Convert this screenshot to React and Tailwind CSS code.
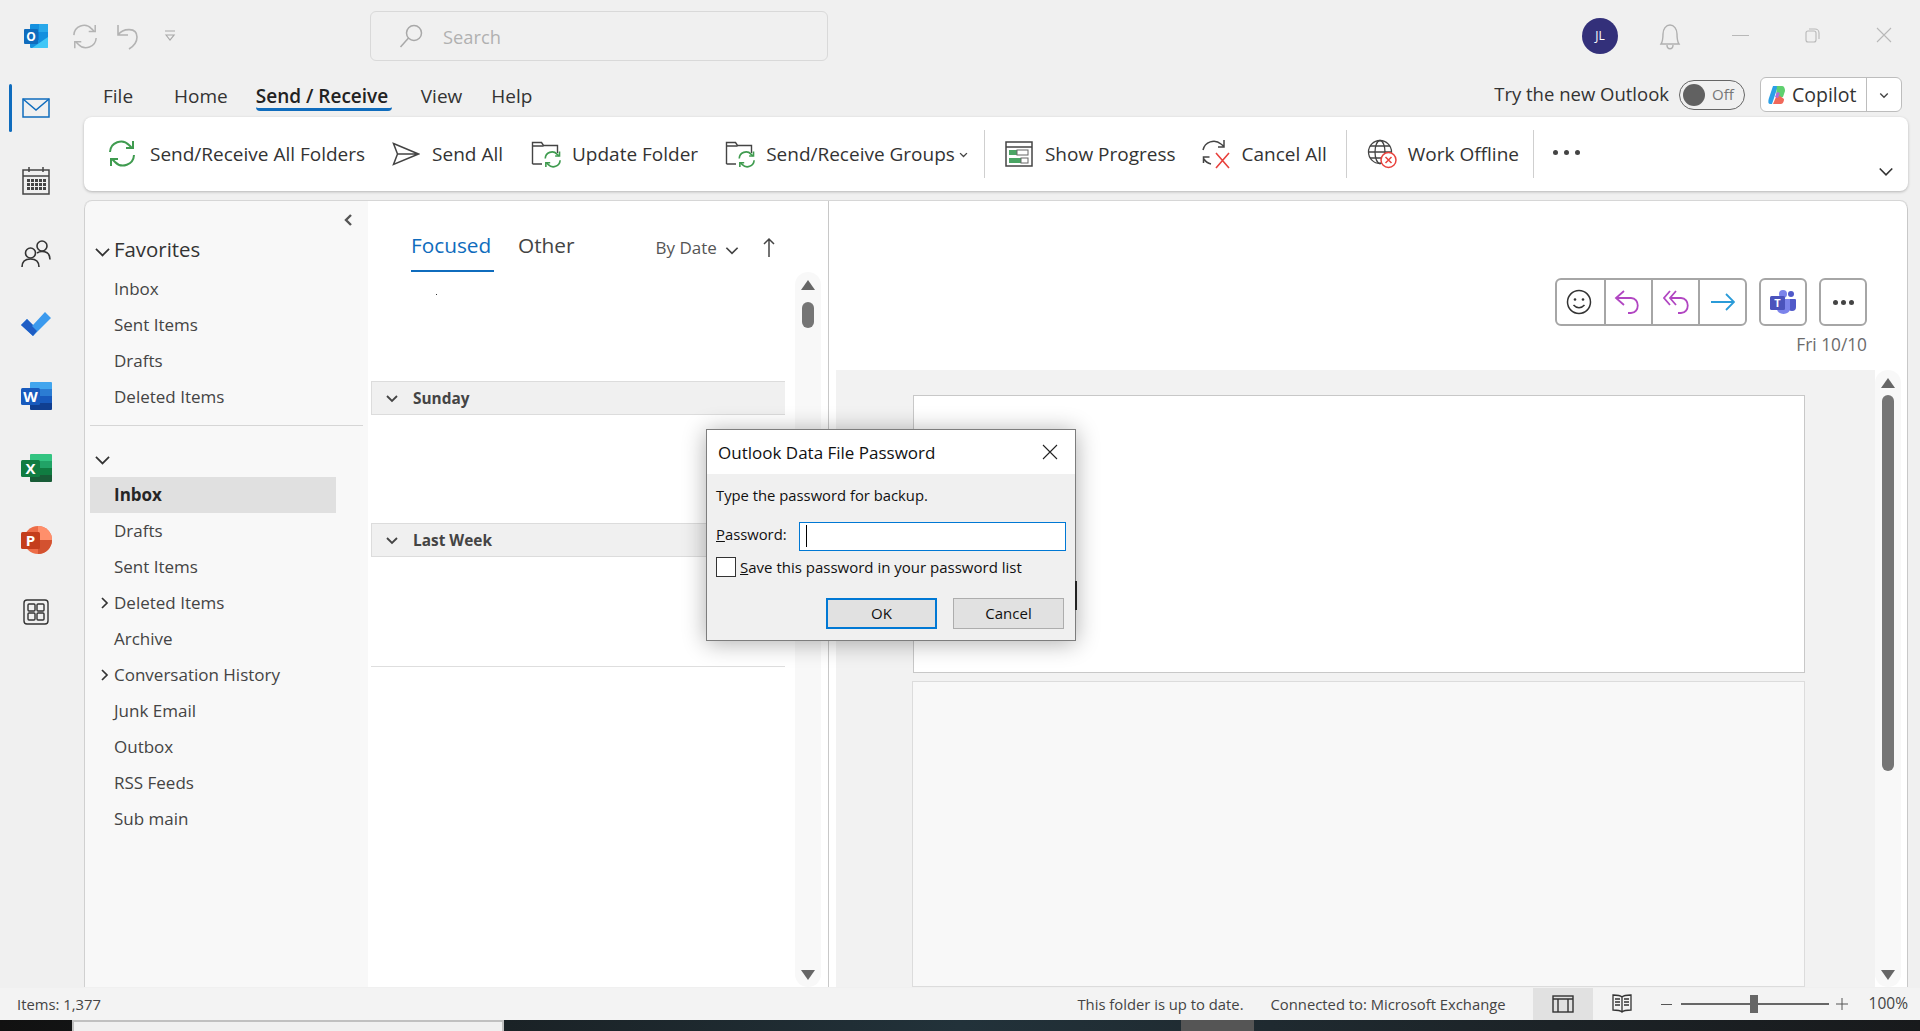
import React from "react";

const font = { fontFamily: '"Open Sans","Noto Sans",sans-serif' };

function SyncArcs({ x = 0, y = 0, s = 1, color = "#3f9b4f", w = 2 }) {
  return (
    <g transform={`translate(${x} ${y}) scale(${s})`} fill="none" stroke={color} strokeWidth={w}>
      <path d="M2 12a11 11 0 0 1 19-7l3 3" />
      <path d="M25 1v7h-7" />
      <path d="M26 15a11 11 0 0 1-19 7l-3-3" />
      <path d="M3 26v-7h7" />
    </g>
  );
}

const FolderIcon = () => (
  <svg width="30" height="30" viewBox="0 0 30 30" fill="none" className="block">
    <path d="M1.5 25V3.5h9l2 3h14V14" stroke="#444" strokeWidth="1.4" />
    <path d="M1.5 7h11M1.5 25H11" stroke="#444" strokeWidth="1.4" />
    <SyncArcs x={13} y={12} s={0.62} w={2.6} />
  </svg>
);

const SendAllIcon = () => (
  <svg width="28" height="24" viewBox="0 0 28 24" fill="none" stroke="#444" strokeWidth="1.5" className="block">
    <path d="M1.5 1.5 26.5 12 1.5 22.5 5.5 12ZM5.5 12h21" />
  </svg>
);

const ProgressIcon = () => (
  <svg width="28" height="26" viewBox="0 0 28 26" className="block">
    <rect x="1" y="1" width="26" height="24" fill="#fff" stroke="#444" strokeWidth="1.5" />
    <path d="M1 6h26" stroke="#444" strokeWidth="1.5" />
    <rect x="4" y="9" width="8" height="5" fill="#4aa564" />
    <rect x="12" y="9" width="11" height="5" fill="#fff" stroke="#666" />
    <rect x="4" y="17" width="12" height="5" fill="#4aa564" />
    <rect x="16" y="17" width="7" height="5" fill="#fff" stroke="#666" />
  </svg>
);

const CancelAllIcon = () => (
  <svg width="30" height="30" viewBox="0 0 30 30" fill="none" className="block">
    <path d="M2 11a11 11 0 0 1 18-6l3 2.5M23 1v7h-6" stroke="#444" strokeWidth="1.5" />
    <path d="M10 25a11 11 0 0 1-7-5M2.5 24v-6h6" stroke="#444" strokeWidth="1.5" />
    <path d="M15 14l13 15M28 14 15 29" stroke="#e8413c" strokeWidth="1.6" />
  </svg>
);

const WorkOfflineIcon = () => (
  <svg width="30" height="30" viewBox="0 0 30 30" fill="none" stroke="#444" strokeWidth="1.3" className="block">
    <circle cx="13" cy="13" r="11.5" />
    <ellipse cx="13" cy="13" rx="5" ry="11.5" />
    <path d="M1.5 13h23M3 7h20M3 19h20" />
    <circle cx="21.5" cy="21" r="7.5" fill="#fff" stroke="#e8413c" strokeWidth="1.5" />
    <path d="M18.5 18l6 6M24.5 18l-6 6" stroke="#e8413c" strokeWidth="1.5" />
  </svg>
);

const Chevron = ({ dir = "down", size = 16, w = 1.5, color = "#444" }) => {
  const d = { down: "M3 6l5 5 5-5", right: "M6 3l5 5-5 5", up: "M3 10l5-5 5 5", left: "M10 3 5 8l5 5" }[dir];
  return (
    <svg width={size} height={size} viewBox="0 0 16 16" fill="none" stroke={color} strokeWidth={w} className="block">
      <path d={d} />
    </svg>
  );
};

function Divider() {
  return <div className="w-px h-[48px] bg-[#cfcfcf]" />;
}

function RibbonBtn({ icon, label, iconW, gap, ml, extra }) {
  return (
    <div className="flex items-center shrink-0" style={{ marginLeft: ml }}>
      <div className="flex items-center justify-center" style={{ width: iconW, marginRight: gap }}>{icon}</div>
      <span className="text-[19px] text-[#333] leading-none whitespace-nowrap">{label}</span>
      {extra}
    </div>
  );
}

const RailMail = () => (
  <svg width="28" height="20" viewBox="0 0 28 20" fill="none" stroke="#0f6cbd" strokeWidth="1.5" className="block">
    <rect x="1" y="1" width="26" height="18" />
    <path d="M1 1l13 11L27 1" />
  </svg>
);
const RailCal = () => (
  <svg width="28" height="28" viewBox="0 0 28 28" fill="none" stroke="#444" strokeWidth="1.5" className="block">
    <rect x="1" y="3" width="26" height="24" />
    <path d="M1 9h26M7 0v5M21 0v5" />
    <g fill="#444" stroke="none">
      {[12, 16, 20].map((y) =>
        [5, 9, 13, 17, 21].map((x) => <rect key={x + "-" + y} x={x} y={y} width="3" height="3" />)
      )}
    </g>
  </svg>
);
const RailPeople = () => (
  <svg width="30" height="28" viewBox="0 0 30 28" fill="none" stroke="#333" strokeWidth="1.6" className="block">
    <circle cx="9.5" cy="13" r="5" />
    <path d="M1 27c0-5 3-8 8.5-8s8.5 3 8.5 8" />
    <circle cx="21" cy="6" r="5" />
    <path d="M16 13c1.500-1 3-1.500 5-1.500 5 0 8 3 8 8" />
  </svg>
);
const RailTodo = () => (
  <svg width="30" height="24" viewBox="0 0 30 24" className="block">
    <path d="M12 24 0 13l6-6 6 6L24 0l6 6Z" fill="#3b9aee" />
    <path d="M0 13l6-6 6 6-1 1 5 5-4 5Z" fill="#1e5dc4" />
  </svg>
);
function OfficeLogo({ letter, a, b, c, d, tile, round }) {
  return (
    <svg width="31" height="28" viewBox="0 0 31 28" className="block">
      {round ? (
        <>
          <circle cx="17" cy="14" r="14" fill={a} />
          <path d="M17 14h14a14 14 0 0 1-14 14Z" fill={c} />
          <path d="M17 14V0a14 14 0 0 1 14 14Z" fill={b} />
        </>
      ) : (
        <>
          <path d="M9 1a1 1 0 0 1 1-1h20a1 1 0 0 1 1 1v6H9Z" fill={a} />
          <rect x="9" y="7" width="22" height="7" fill={b} />
          <rect x="9" y="14" width="22" height="7" fill={c} />
          <path d="M9 21h22v6a1 1 0 0 1-1 1H10a1 1 0 0 1-1-1Z" fill={d} />
        </>
      )}
      <rect x="0" y="6" width="19" height="17" rx="1.500" fill={tile} />
      <text x="9.500" y="20" textAnchor="middle" fontSize="15" fontWeight="700" fill="#fff" fontFamily="Open Sans">{letter}</text>
    </svg>
  );
}
const RailApps = () => (
  <svg width="26" height="26" viewBox="0 0 26 26" fill="none" stroke="#333" strokeWidth="1.4" className="block">
    <rect x="1" y="1" width="24" height="24" rx="3" />
    <rect x="5" y="5" width="7" height="7" rx="1" />
    <rect x="14" y="5" width="7" height="7" rx="1" />
    <rect x="5" y="14" width="7" height="7" rx="1" />
    <rect x="14" y="14" width="7" height="7" rx="1" />
  </svg>
);

function RailSlot({ children }) {
  return <div className="h-[72px] shrink-0 flex items-center justify-center pr-[12px]">{children}</div>;
}

function Rail() {
  return (
    <div className="w-[84px] shrink-0 flex flex-col">
      <div className="h-[48px] shrink-0 flex items-center">
        <div className="w-[3px] h-[48px] bg-[#0f6cbd] ml-[9px] rounded-sm" />
        <div className="ml-[10px]"><RailMail /></div>
      </div>
      <div className="mt-[13px]"><RailSlot><RailCal /></RailSlot></div>
      <div className="mt-[1px]"><RailSlot><RailPeople /></RailSlot></div>
      <div className="-mt-[2px]"><RailSlot><RailTodo /></RailSlot></div>
      <RailSlot>
        <OfficeLogo letter="W" a="#41a5ee" b="#2b7cd3" c="#185abd" d="#103f91" tile="#185abd" />
      </RailSlot>
      <RailSlot>
        <OfficeLogo letter="X" a="#33c481" b="#21a366" c="#107c41" d="#185c37" tile="#107c41" />
      </RailSlot>
      <RailSlot>
        <OfficeLogo letter="P" round a="#ed6c47" b="#ff8f6b" c="#d35230" tile="#c43e1c" />
      </RailSlot>
      <RailSlot><RailApps /></RailSlot>
    </div>
  );
}

function TitleBar() {
  return (
    <div className="h-[84px] shrink-0 flex items-start">
      <div className="mt-[24px] ml-[24px]">
        <svg width="25" height="25" viewBox="0 0 25 25" className="block">
          <rect x="6" y="0" width="18" height="24" rx="1" fill="#1490df" />
          <rect x="15" y="0" width="9" height="8" fill="#28a8ea" />
          <rect x="6" y="8" width="9" height="8" fill="#0f78d4" />
          <path d="M8 24 24 13v11Z" fill="#50d9ff" opacity=".75" />
          <rect x="0" y="5" width="14" height="15" rx="1" fill="#0f6cbd" />
          <text x="7" y="17" textAnchor="middle" fontSize="12" fontWeight="700" fill="#fff" fontFamily="Open Sans">O</text>
        </svg>
      </div>
      <div className="mt-[24px] ml-[23px]">
        <svg width="26" height="26" viewBox="0 0 28 28" className="block">
          <SyncArcs color="#b3b3b3" w={1.6} />
        </svg>
      </div>
      <div className="mt-[24px] ml-[18px]">
        <svg width="24" height="26" viewBox="0 0 24 26" fill="none" stroke="#b3b3b3" strokeWidth="1.6" className="block">
          <path d="M2 1v10h10M2 11C7 4 21 3 21 13c0 5-3 9-8 12" />
        </svg>
      </div>
      <div className="mt-[30px] ml-[24px]">
        <svg width="12" height="12" viewBox="0 0 12 12" fill="none" stroke="#a8a8a8" strokeWidth="1.200" className="block">
          <path d="M1 1h10M2 5l4 5 4-5Z" />
        </svg>
      </div>
      <div className="mt-[11px] ml-[194px] w-[458px] h-[50px] border border-[#d9d9d9] rounded-md flex items-center pl-[28px]">
        <svg width="24" height="24" viewBox="0 0 24 24" fill="none" stroke="#a8a8a8" strokeWidth="1.500" className="block">
          <circle cx="15" cy="9" r="7.500" />
          <path d="M9.500 14 1.500 23" />
        </svg>
        <span className="ml-[20px] mt-[2px] text-[18.300px] text-[#b0b0b0]">Search</span>
      </div>
      <div className="mt-[18px] ml-[754px] w-[36px] h-[36px] rounded-full bg-[#33307a] text-white text-[12px] flex items-center justify-center">JL</div>
      <div className="mt-[23px] ml-[40px]">
        <svg width="24" height="28" viewBox="0 0 24 28" fill="none" stroke="#b0b0b0" strokeWidth="1.400" className="block">
          <path d="M3 21c2-3 2-5 2-10 0-5 3-9 7-9s7 4 7 9c0 5 0 7 2 10ZM9 22c0 5 6 5 6 0" />
        </svg>
      </div>
      <div className="mt-[35px] ml-[50px] w-[17px] h-px bg-[#b8b8b8]" />
      <div className="mt-[27px] ml-[56px]">
        <svg width="16" height="16" viewBox="0 0 16 16" fill="none" stroke="#b8b8b8" strokeWidth="1.100" className="block">
          <rect x="1" y="4" width="10" height="11" rx="2" />
          <path d="M4 2h6a4 4 0 0 1 4 4v6" />
        </svg>
      </div>
      <div className="mt-[27px] ml-[55px]">
        <svg width="16" height="16" viewBox="0 0 16 16" fill="none" stroke="#b8b8b8" strokeWidth="1.100" className="block">
          <path d="M1 1l14 14M15 1 1 15" />
        </svg>
      </div>
    </div>
  );
}

function TabsRow() {
  const cls = "text-[19px] text-[#333] leading-none";
  return (
    <div className="h-[33px] flex items-start shrink-0">
      <span className={cls + " ml-[19px] mt-[3px]"}>File</span>
      <span className={cls + " ml-[41px] mt-[3px]"}>Home</span>
      <div className="ml-[28px] w-[136px] h-[27px] border-b-[3px] border-[#0f6cbd] rounded-sm flex items-start">
        <span className="text-[19px] font-semibold text-[#222] leading-none mt-[3px] whitespace-nowrap">Send / Receive</span>
      </div>
      <span className={cls + " ml-[29px] mt-[3px]"}>View</span>
      <span className={cls + " ml-[29px] mt-[3px]"}>Help</span>
      <div className="ml-auto flex items-center -mt-[7px]">
        <span className="text-[18.500px] text-[#333] leading-none whitespace-nowrap">Try the new Outlook</span>
        <div className="ml-[10px] w-[66px] h-[30px] border border-[#666] rounded-full flex items-center pl-[3px]">
          <div className="w-[22px] h-[22px] rounded-full bg-[#616161]" />
          <span className="ml-[7px] text-[15px] text-[#777]">Off</span>
        </div>
        <div className="ml-[15px] mr-[18px] w-[142px] h-[35px] border border-[#bdbdbd] rounded-md bg-white flex items-center">
          <div className="ml-[7px]">
            <svg width="18" height="20" viewBox="0 0 18 20" className="block">
              <path d="M5 1h5L7 10 4 19H2C0 19 0 16 1 13Z" fill="#2aa0e8" />
              <path d="M9 1h5c2 0 3 2 3 5l-2 6-4 1-3-2Z" fill="#5fd06f" />
              <path d="M5 19h8c2 0 3-3 3-5l-4-3-4 1Z" fill="#f0685a" />
              <path d="M9 7l3 1-2 5-3-1Z" fill="#b46ad8" />
            </svg>
          </div>
          <span className="ml-[6px] text-[19.500px] text-[#333] leading-none">Copilot</span>
          <div className="ml-auto w-[35px] h-full border-l border-[#bdbdbd] flex items-center justify-center">
            <Chevron size={12} w={1.800} />
          </div>
        </div>
      </div>
    </div>
  );
}

function Ribbon() {
  return (
    <div className="h-[74px] mr-[12px] shrink-0 bg-white rounded-lg shadow-[0_1px_3px_rgba(0,0,0,0.25)] flex items-center relative">
      <RibbonBtn ml={23} iconW={30} gap={13} label="Send/Receive All Folders"
        icon={<svg width="28" height="28" viewBox="0 0 28 28" className="block"><SyncArcs /></svg>} />
      <RibbonBtn ml={27} iconW={28} gap={12} label="Send All" icon={<SendAllIcon />} />
      <RibbonBtn ml={28} iconW={30} gap={11} label="Update Folder" icon={<FolderIcon />} />
      <RibbonBtn ml={27} iconW={30} gap={11} label="Send/Receive Groups" icon={<FolderIcon />}
        extra={<span className="ml-[3px]"><Chevron size={11} w={2} /></span>} />
      <div className="ml-[15px]"><Divider /></div>
      <RibbonBtn ml={20} iconW={28} gap={12} label="Show Progress" icon={<ProgressIcon />} />
      <RibbonBtn ml={25} iconW={30} gap={11} label="Cancel All" icon={<CancelAllIcon />} />
      <div className="ml-[19px]"><Divider /></div>
      <RibbonBtn ml={20} iconW={30} gap={11} label="Work Offline" icon={<WorkOfflineIcon />} />
      <div className="ml-[14px]"><Divider /></div>
      <div className="ml-[19px] flex gap-[6px] -mt-[4px]">
        <span className="w-[5px] h-[5px] rounded-full bg-[#444]" />
        <span className="w-[5px] h-[5px] rounded-full bg-[#444]" />
        <span className="w-[5px] h-[5px] rounded-full bg-[#444]" />
      </div>
      <div className="absolute right-[12px] bottom-[10px]"><Chevron size={20} w={1.300} color="#333" /></div>
    </div>
  );
}

function NavRow({ label, selected, caret }) {
  return (
    <div className={"h-[36px] shrink-0 w-[246px] ml-[5px] flex items-center relative " + (selected ? "bg-[#e0e0e0]" : "")}>
      {caret && (
        <span className="absolute left-[6px]">
          <Chevron dir="right" size={16} w={1.700} color="#333" />
        </span>
      )}
      <span className={"ml-[24px] -mt-[2px] text-[17px] leading-none " + (selected ? "font-bold text-[#262626]" : "text-[#444]")}>{label}</span>
    </div>
  );
}

function NavPane() {
  const second = ["Inbox", "Drafts", "Sent Items", "Deleted Items", "Archive", "Conversation History", "Junk Email", "Outbox", "RSS Feeds", "Sub main"];
  return (
    <div className="w-[284px] shrink-0 bg-[#f8f8f8] border-l border-[#d0d0d0] rounded-tl-lg flex flex-col pt-[32px] relative">
      <div className="absolute top-[11px] right-[11px]"><Chevron dir="left" size={16} w={2.400} color="#555" /></div>
      <div className="h-[36px] shrink-0 ml-[5px] mb-[2px] flex items-center">
        <span className="ml-[2px]"><Chevron size={21} w={1.300} color="#333" /></span>
        <span className="ml-[1px] -mt-[4px] text-[20.400px] text-[#333] leading-none">Favorites</span>
      </div>
      <NavRow label="Inbox" />
      <NavRow label="Sent Items" />
      <NavRow label="Drafts" />
      <NavRow label="Deleted Items" />
      <div className="h-px shrink-0 bg-[#d6d6d6] ml-[5px] mr-[5px] mt-[10px] mb-[15px]" />
      <div className="h-[36px] shrink-0 ml-[5px] flex items-center">
        <span className="ml-[2px]"><Chevron size={21} w={1.300} color="#333" /></span>
      </div>
      {second.map((l) => (
        <NavRow key={l} label={l} selected={l === "Inbox"} caret={l === "Deleted Items" || l === "Conversation History"} />
      ))}
    </div>
  );
}

function SectionHead({ label, mt }) {
  return (
    <div className="h-[34px] w-[414px] ml-[3px] bg-[#f0f0f0] border border-r-0 border-[#dcdcdc] flex items-center" style={{ marginTop: mt }}>
      <span className="ml-[12px]"><Chevron size={16} w={1.800} color="#444" /></span>
      <span className="ml-[13px] mt-[1px] text-[15.400px] font-bold text-[#444] leading-none">{label}</span>
    </div>
  );
}

function ScrollBar({ thumbH, thumbTop, w = 26 }) {
  return (
    <div className="bg-[#f8f8f8] rounded-full flex flex-col items-center pt-[8px] pb-[7px]" style={{ width: w }}>
      <svg width="14" height="10" viewBox="0 0 14 10" className="block shrink-0"><path d="M7 0l7 10H0Z" fill="#666" /></svg>
      <div className="w-[12px] rounded-full bg-[#757575] shrink-0" style={{ height: thumbH, marginTop: thumbTop }} />
      <svg width="14" height="10" viewBox="0 0 14 10" className="block mt-auto shrink-0"><path d="M7 10 14 0H0Z" fill="#666" /></svg>
    </div>
  );
}

function MessageList() {
  return (
    <div className="w-[461px] shrink-0 bg-white border-r border-[#c8c8c8] flex flex-col">
      <div className="h-[16px] shrink-0" />
      <div className="h-[55px] shrink-0 flex items-start">
        <div className="ml-[43px] w-[83px] h-[55px] border-b-[2px] border-[#0f6cbd]">
          <span className="block mt-[18px] text-[20.800px] text-[#0f6cbd] leading-none">Focused</span>
        </div>
        <span className="block ml-[24px] mt-[18px] text-[20.800px] text-[#444] leading-none">Other</span>
        <span className="block ml-[81px] mt-[22px] text-[17px] text-[#555] leading-none">By Date</span>
        <span className="mt-[24px] ml-[6px]"><Chevron size={18} w={1.500} color="#444" /></span>
        <span className="mt-[20px] ml-[21px]">
          <svg width="14" height="20" viewBox="0 0 14 20" fill="none" stroke="#444" strokeWidth="1.500" className="block">
            <path d="M7 20V2M2 7l5-5 5 5" />
          </svg>
        </span>
      </div>
      <div className="flex-1 flex min-h-0">
        <div className="w-[417px] relative">
          <div className="absolute left-[68px] top-[22px] w-px h-px bg-[#333]" />
          <SectionHead label="Sunday" mt={109} />
          <SectionHead label="Last Week" mt={108} />
          <div className="h-px w-[414px] ml-[3px] bg-[#dedede] mt-[109px]" />
        </div>
        <div className="ml-[10px] flex"><ScrollBar thumbH={26} thumbTop={12} /></div>
      </div>
    </div>
  );
}

const ActionCell = ({ children, border, nudge }) => (
  <div className={"w-[47px] h-full flex items-center justify-center " + (border ? "border-l-2 border-[#a6a6a6] " : "") + (nudge ? "pr-[3px]" : "")}>{children}</div>
);

function ReadingPane() {
  return (
    <div className="flex-1 min-w-0 bg-white flex flex-col border-r border-[#c8c8c8] rounded-tr-lg">
      <div className="h-[125px] shrink-0 flex justify-end items-end pr-[40px]">
        <div className="flex h-[48px]">
          <div className="flex h-full border-2 border-[#a6a6a6] rounded-md">
            <ActionCell nudge>
              <svg width="26" height="26" viewBox="0 0 26 26" fill="none" stroke="#333" strokeWidth="1.500" className="block">
                <circle cx="13" cy="13" r="11.500" />
                <circle cx="9" cy="10.500" r="1.300" fill="#333" stroke="none" />
                <circle cx="17" cy="10.500" r="1.300" fill="#333" stroke="none" />
                <path d="M7.500 16c3 3.500 8 3.500 11 0" />
              </svg>
            </ActionCell>
            <ActionCell border nudge>
              <svg width="26" height="24" viewBox="0 0 26 24" fill="none" stroke="#b146c2" strokeWidth="1.800" className="block">
                <path d="M10 1 2 8l8 7M2 8h15c9 0 9 15 0 15h-3" />
              </svg>
            </ActionCell>
            <ActionCell border>
              <svg width="26" height="24" viewBox="0 0 26 24" fill="none" stroke="#b146c2" strokeWidth="1.800" className="block">
                <path d="M7 1 1 8l6 7M13 1 7 8l6 7M7 8h11c9 0 9 15 0 15h-3" />
              </svg>
            </ActionCell>
            <ActionCell border>
              <svg width="24" height="18" viewBox="0 0 24 18" fill="none" stroke="#2a9bd8" strokeWidth="1.800" className="block">
                <path d="M0 9h22M15 1l8 8-8 8" />
              </svg>
            </ActionCell>
          </div>
          <div className="ml-[12px] w-[48px] h-full border-2 border-[#a6a6a6] rounded-md flex items-center justify-center">
            <svg width="26" height="24" viewBox="0 0 26 24" className="block">
              <circle cx="21" cy="4" r="3" fill="#5059c9" />
              <path d="M18 9h7a1 1 0 0 1 1 1v7a4 4 0 0 1-8 0Z" fill="#5059c9" />
              <circle cx="13" cy="4" r="4" fill="#7b83eb" />
              <path d="M7 9h13v10a6.500 5 0 0 1-13 0Z" fill="#7b83eb" />
              <rect x="0" y="6" width="15" height="14" rx="1.500" fill="#4b53bc" />
              <text x="7.500" y="17" textAnchor="middle" fontSize="11" fontWeight="700" fill="#fff" fontFamily="Open Sans">T</text>
            </svg>
          </div>
          <div className="ml-[12px] w-[48px] h-full border-2 border-[#a6a6a6] rounded-md flex items-center justify-center gap-[3px]">
            <span className="w-[5px] h-[5px] rounded-full bg-[#444]" />
            <span className="w-[5px] h-[5px] rounded-full bg-[#444]" />
            <span className="w-[5px] h-[5px] rounded-full bg-[#444]" />
          </div>
        </div>
      </div>
      <div className="h-[44px] shrink-0 flex justify-end items-center pr-[40px] pb-[7px]">
        <span className="text-[17.300px] text-[#6b6b6b] leading-none">Fri 10/10</span>
      </div>
      <div className="flex-1 flex min-h-0">
        <div className="ml-[7px] w-[1039px] bg-[#f2f2f2] flex flex-col pt-[25px] pl-[77px] pr-[70px]">
          <div className="h-[278px] shrink-0 bg-white border border-[#c8c8c8]" />
          <div className="flex-1 mt-[8px] bg-[#f8f8f8] border border-[#dcdcdc] -ml-px" />
        </div>
        <div className="flex"><ScrollBar thumbH={376} thumbTop={7} /></div>
      </div>
    </div>
  );
}

function Dialog() {
  return (
    <div className="absolute left-[706px] top-[429px] w-[370px] h-[212px] bg-[#f0f0f0] border border-[#7d7d7d] shadow-[0_2px_22px_rgba(0,0,0,0.32)] flex flex-col text-[#111]">
      <div className="h-[44px] shrink-0 bg-white flex items-center pl-[11px] pr-[14px]">
        <span className="text-[17px] leading-none whitespace-nowrap">Outlook Data File Password</span>
        <span className="ml-auto">
          <svg width="16" height="16" viewBox="0 0 16 16" fill="none" stroke="#222" strokeWidth="1.100" className="block mr-[3px]">
            <path d="M1 1l14 14M15 1 1 15" />
          </svg>
        </span>
      </div>
      <div className="pl-[9px] pr-[9px] flex flex-col flex-1">
        <div className="mt-[11px] h-[20px] text-[14.800px] leading-[20px] whitespace-nowrap">Type the password for backup.</div>
        <div className="mt-[16px] flex items-center h-[30px]">
          <span className="text-[14.800px] leading-none -mt-[3px]"><u>P</u>assword:</span>
          <div className="ml-auto w-[267px] h-[29px] bg-white border border-[#0078d4] flex items-center pl-[6px]">
            <div className="w-px h-[22px] bg-black" />
          </div>
        </div>
        <div className="mt-[6px] flex items-center h-[20px]">
          <div className="w-[20px] h-[20px] bg-white border border-[#333]" />
          <span className="ml-[4px] text-[15px] leading-none whitespace-nowrap"><u>S</u>ave this password in your password list</span>
        </div>
        <div className="mt-[21px] flex pl-[110px]">
          <div className="w-[111px] h-[31px] bg-[#e1e1e1] border-2 border-[#0078d4] flex items-center justify-center text-[15px]">OK</div>
          <div className="ml-[16px] w-[111px] h-[31px] bg-[#e1e1e1] border border-[#adadad] flex items-center justify-center text-[15px]">Cancel</div>
        </div>
      </div>
      <div className="absolute -right-[2px] top-[151px] w-[2px] h-[29px] bg-[#222]" />
    </div>
  );
}

function StatusBar() {
  return (
    <div className="h-[32px] shrink-0 bg-[#f3f3f3] flex items-center text-[14.800px] text-[#444] mt-px">
      <span className="ml-[17px]">Items: 1,377</span>
      <span className="ml-auto">This folder is up to date.</span>
      <span className="ml-[27px]">Connected to: Microsoft Exchange</span>
      <div className="ml-[27px] w-[60px] h-full bg-[#e1e1e1] flex items-center justify-center">
        <svg width="22" height="18" viewBox="0 0 22 18" fill="none" stroke="#333" strokeWidth="1.400" className="block">
          <rect x="1" y="1" width="20" height="16" />
          <path d="M1 4h20M6 4v13M16 4v13" />
        </svg>
      </div>
      <div className="ml-[18px]">
        <svg width="22" height="20" viewBox="0 0 22 20" fill="none" stroke="#333" strokeWidth="1.300" className="block">
          <path d="M11 3C9 1 5 1 2 1v15c3 0 7 0 9 2 2-2 6-2 9-2V1c-3 0-7 0-9 2ZM11 3v15" />
          <path d="M4 5h5M4 8h5M4 11h5M13 5h5M13 8h5M13 11h5" />
        </svg>
      </div>
      <div className="ml-[28px] w-[11px] h-px bg-[#555]" />
      <div className="ml-[9px] w-[148px] h-[2px] bg-[#666] flex items-center">
        <div className="ml-[69px] w-[8px] h-[18px] bg-[#666] shrink-0" />
      </div>
      <svg width="12" height="12" viewBox="0 0 12 12" stroke="#555" strokeWidth="1" className="block ml-[7px]"><path d="M0 6h12M6 0v12" /></svg>
      <span className="ml-[21px] mr-[12px] text-[15.500px]">100%</span>
    </div>
  );
}

function TaskBar() {
  return (
    <div className="h-[11px] shrink-0 bg-gradient-to-r from-[#111] via-[#22323a] to-[#181a1c] flex">
      <div className="ml-[72px] w-[432px] bg-[#f0f0f0] border-t-2 border-x-2 border-[#c0c0c0]" />
      <div className="ml-[677px] w-[73px] bg-[#555]" />
    </div>
  );
}

export default function App() {
  return (
    <div className="w-[1920px] h-[1031px] relative overflow-hidden bg-[#f0f0f0] flex flex-col" style={font}>
      <TitleBar />
      <div className="flex-1 min-h-0 flex">
        <Rail />
        <div className="flex-1 min-w-0 flex flex-col">
          <TabsRow />
          <Ribbon />
          <div className="flex-1 min-h-0 flex mt-[9px] mr-[12px] border-t border-[#d6d6d6] rounded-t-lg overflow-hidden">
            <NavPane />
            <MessageList />
            <ReadingPane />
          </div>
        </div>
      </div>
      <StatusBar />
      <TaskBar />
      <Dialog />
    </div>
  );
}
